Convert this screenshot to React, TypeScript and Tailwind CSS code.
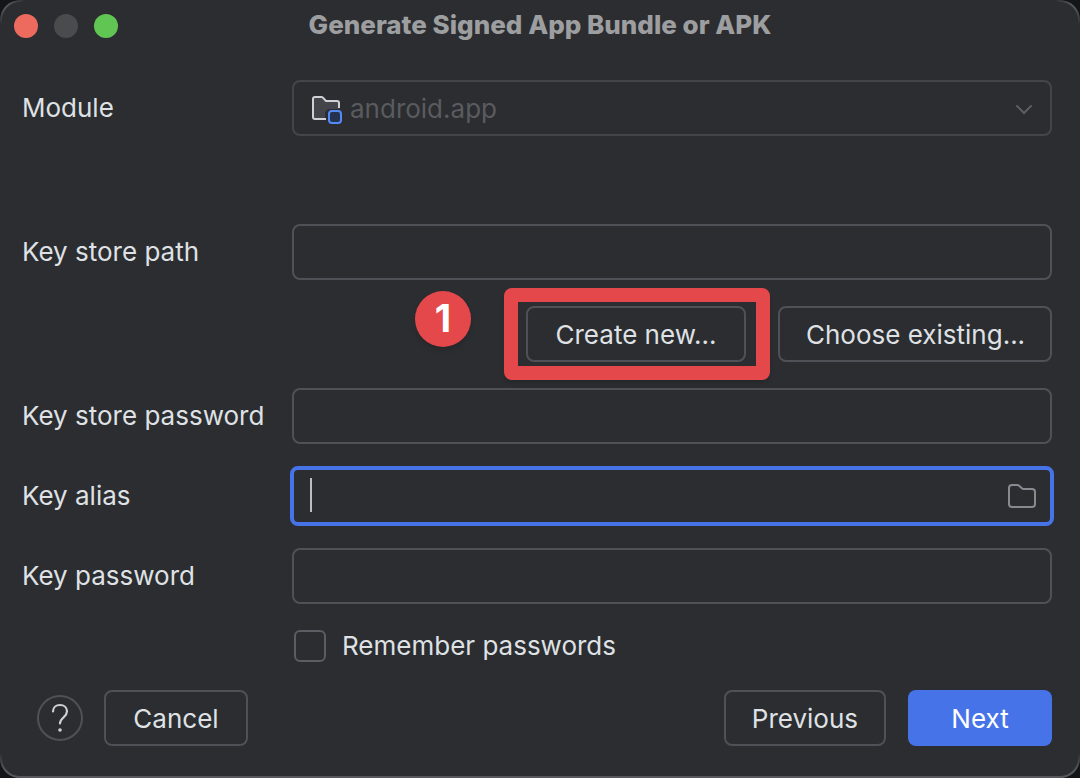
import type { ReactNode, ButtonHTMLAttributes, InputHTMLAttributes } from "react";

const fieldClass =
  "block h-14 w-full rounded-lg border-2 border-[#4e5157] bg-transparent px-4 text-[26px] text-[#dfe1e5] outline-none";

function Label({ htmlFor, children }: { htmlFor: string; children: ReactNode }) {
  return (
    <label htmlFor={htmlFor} className="whitespace-nowrap">
      {children}
    </label>
  );
}

function Field(props: InputHTMLAttributes<HTMLInputElement>) {
  return <input {...props} className={fieldClass} />;
}

function OutlineButton({ children, ...rest }: ButtonHTMLAttributes<HTMLButtonElement>) {
  return (
    <button
      type="button"
      {...rest}
      className="h-14 min-w-36 rounded-lg border-2 border-[#4e5157] px-[26px] pt-0.5 whitespace-nowrap text-[#dfe1e5]"
    >
      {children}
    </button>
  );
}

function ModuleIcon() {
  return (
    <svg width="32" height="32" viewBox="0 0 32 32" fill="none" aria-hidden="true">
      <path
        d="M15 26H5a2 2 0 0 1-2-2V6a2 2 0 0 1 2-2h7l4 4h12a2 2 0 0 1 2 2v6H18l-3 3z"
        fill="#43454a"
      />
      <path
        d="M16 26H5a2 2 0 0 1-2-2V6a2 2 0 0 1 2-2h6.5a2 2 0 0 1 1.4.6L16 8h11a2 2 0 0 1 2 2v5"
        stroke="#ced0d6"
        strokeWidth="2"
      />
      <rect x="19" y="18" width="12" height="12" rx="3" fill="#25324d" stroke="#548af7" strokeWidth="2" />
    </svg>
  );
}

function FolderIcon() {
  return (
    <svg width="32" height="32" viewBox="0 0 32 32" fill="none" aria-hidden="true">
      <path
        d="M3 7a3 3 0 0 1 3-3h5.2a3 3 0 0 1 2 .8l2.9 2.6a2 2 0 0 0 1.4.6H26a3 3 0 0 1 3 3v12a3 3 0 0 1-3 3H6a3 3 0 0 1-3-3z"
        stroke="#868a91"
        strokeWidth="2"
      />
    </svg>
  );
}

function CornerHighlights() {
  return (
    <>
      <span className="pointer-events-none absolute top-0 left-0 size-7 rounded-tl-[20px] border-t-2 border-l-2 border-[#57585b] mask-radial-[28px_28px] mask-radial-at-top-left mask-radial-from-30% mask-radial-to-90%" />
      <span className="pointer-events-none absolute top-0 right-0 size-7 rounded-tr-[20px] border-t-2 border-r-2 border-[#57585b] mask-radial-[28px_28px] mask-radial-at-top-right mask-radial-from-30% mask-radial-to-90%" />
      <span className="pointer-events-none absolute -bottom-0.5 left-0 size-7 rounded-bl-[20px] border-b-2 border-l-2 border-[#57585b] mask-radial-[28px_28px] mask-radial-at-bottom-left mask-radial-from-30% mask-radial-to-90%" />
      <span className="pointer-events-none absolute right-0 -bottom-0.5 size-7 rounded-br-[20px] border-r-2 border-b-2 border-[#57585b] mask-radial-[28px_28px] mask-radial-at-bottom-right mask-radial-from-30% mask-radial-to-90%" />
    </>
  );
}

export default function App() {
  return (
    <div className="min-h-screen bg-[#141517] font-['Inter','Liberation_Sans',sans-serif] text-[26px] leading-8 text-[#dfe1e5]">
      <main className="relative flex min-h-screen flex-col rounded-[20px] border-b-2 border-[#57585b] bg-[#2b2d30]">
        <CornerHighlights />
        <header className="grid h-[50px] grid-cols-[1fr_auto_1fr] items-center px-3.5">
          <div className="flex gap-4 pt-0.5">
            <button type="button" aria-label="Close" className="size-6 rounded-full bg-[#ed6a5e]" />
            <button type="button" aria-label="Minimize" disabled className="size-6 rounded-full bg-[#4a4b4d]" />
            <button type="button" aria-label="Zoom" className="size-6 rounded-full bg-[#61c554]" />
          </div>
          <h1 className="font-extrabold text-[#9d9ea0]">Generate Signed App Bundle or APK</h1>
        </header>

        <form className="flex grow flex-col pt-[30px] pr-7 pb-[30px] pl-[22px]">
          <div className="grid grid-cols-[270px_1fr] items-center">
            <Label htmlFor="module">Module</Label>
            <div className="relative">
              <select
                id="module"
                disabled
                className="block h-14 w-full appearance-none rounded-lg border-2 border-[#43454a] bg-transparent pt-0.5 pl-14 text-[#5a5b5f] opacity-100"
              >
                <option>android.app</option>
              </select>
              <span className="pointer-events-none absolute inset-y-0 left-[18px] flex items-center pt-0.5">
                <ModuleIcon />
              </span>
              <span className="pointer-events-none absolute inset-y-0 right-5 flex items-center pt-1">
                <svg width="16" height="10" viewBox="0 0 16 10" fill="none" aria-hidden="true">
                  <path d="M1 1l7 7 7-7" stroke="#5a5d63" strokeWidth="2" strokeLinecap="round" />
                </svg>
              </span>
            </div>
          </div>

          <div className="mt-22 grid grid-cols-[270px_1fr] items-center">
            <Label htmlFor="store-path">Key store path</Label>
            <Field id="store-path" type="text" />
          </div>

          <div className="mt-[26px] grid grid-cols-[220px_274px] justify-end gap-8">
            <div className="relative grid">
              <OutlineButton>Create new...</OutlineButton>
              <span className="pointer-events-none absolute -inset-y-[18px] -right-6 -left-[22px] rounded-lg border-[14px] border-[#e5484b] shadow-md" />
              <span className="absolute -top-[15px] right-[275px] flex size-14 items-center justify-center rounded-full bg-[#e5484b] pb-0.5 text-[38px] font-bold text-white shadow-md">
                1
              </span>
            </div>
            <OutlineButton>Choose existing...</OutlineButton>
          </div>

          <div className="mt-[26px] grid grid-cols-[270px_1fr] items-center">
            <Label htmlFor="store-password">Key store password</Label>
            <Field id="store-password" type="password" />
          </div>

          <div className="mt-6 grid grid-cols-[270px_1fr] items-center">
            <Label htmlFor="alias">Key alias</Label>
            <div className="relative">
              <input
                id="alias"
                type="text"
                className="block h-14 w-full rounded-md bg-transparent pr-14 pl-4 outline-4 -outline-offset-2 outline-[#4674e8]"
              />
              <span className="pointer-events-none absolute top-2.5 left-[18px] h-[34px] w-0.5 bg-[#bcbec4]" />
              <button type="button" aria-label="Browse aliases" className="absolute inset-y-0 right-3.5 flex items-center pt-0.5">
                <FolderIcon />
              </button>
            </div>
          </div>

          <div className="mt-6 grid grid-cols-[270px_1fr] items-center">
            <Label htmlFor="key-password">Key password</Label>
            <Field id="key-password" type="password" />
          </div>

          <div className="mt-[26px] flex items-center gap-4 pl-[272px]">
            <input
              id="remember"
              type="checkbox"
              className="size-8 shrink-0 appearance-none rounded-md border-2 border-[#5a5d63] checked:bg-[#4674e8]"
            />
            <label htmlFor="remember">Remember passwords</label>
          </div>

          <footer className="mt-auto flex items-center pt-7">
            <button
              type="button"
              aria-label="Help"
              className="ml-[15px] flex size-[46px] items-center justify-center rounded-full border-2 border-[#4e5157]"
            >
              <svg width="18" height="30" viewBox="0 0 18 30" fill="none" aria-hidden="true">
                <path
                  d="M2 8.5C2 4.5 5 2 9 2s7 2.6 7 6.3c0 3-1.7 4.4-3.6 6.2C10.3 16.4 9 17.7 9 20.5"
                  stroke="#ced0d6"
                  strokeWidth="2.2"
                  strokeLinecap="round"
                />
                <circle cx="9" cy="27" r="1.8" fill="#ced0d6" />
              </svg>
            </button>
            <div className="ml-[21px] flex grow justify-between">
              <OutlineButton>Cancel</OutlineButton>
              <div className="flex gap-[22px]">
                <OutlineButton>Previous</OutlineButton>
                <button type="submit" className="h-14 w-36 rounded-lg bg-[#4674e8] pt-0.5 text-white">
                  Next
                </button>
              </div>
            </div>
          </footer>
        </form>
      </main>
    </div>
  );
}
